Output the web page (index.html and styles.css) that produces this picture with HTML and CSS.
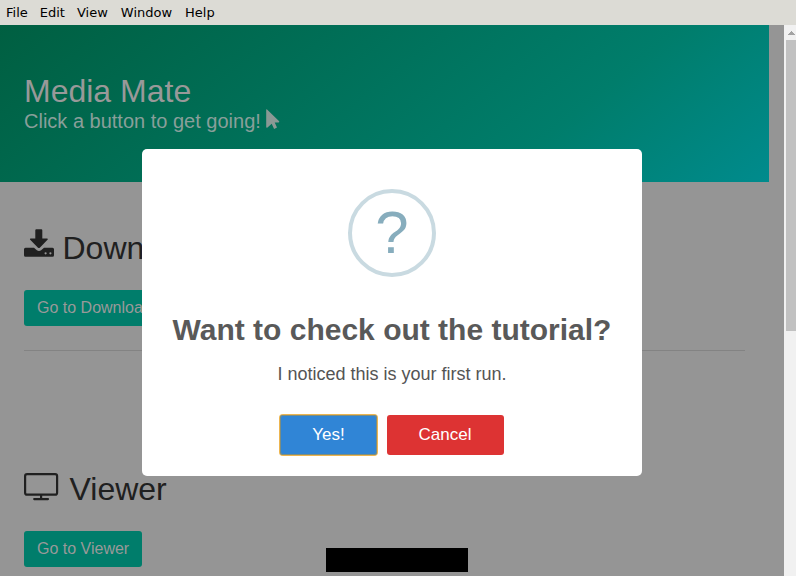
FILE: index.html
```html
<!DOCTYPE html>
<html lang="en">
<head>
<meta charset="utf-8">
<title>Media Mate</title>
<link rel="stylesheet" href="styles.css">
</head>
<body>
<nav class="menubar"><span>File</span><span>Edit</span><span>View</span><span class="spaced">Window</span><span class="spaced">Help</span></nav>
<div class="window">
  <main class="page">
    <header class="hero">
      <h1 class="hero-title">Media Mate</h1>
      <h2 class="hero-subtitle">Click a button to get going!<svg class="pointer" viewBox="0 0 14 20"><path d="M.8.2 13.2 12.3Q13.5 13.4 12.6 13.5H8.7L11 18.5 8.1 19.9 5.7 14.8 1.5 18.6Q.2 19.2.2 18V.8Q.2 0 .8.2Z"/></svg></h2>
    </header>
    <section class="section">
      <h2 class="title"><svg class="download-icon" viewBox="0 0 30 28"><path fill-rule="evenodd" d="M12.3.3h5Q18.3.3 18.3 1.3V9.6h4.8Q24.3 9.8 23.5 10.8L15.8 18.7Q14.9 19.5 14 18.7L6.2 10.8Q5.5 9.8 6.6 9.6h4.7V1.3Q11.3.3 12.3.3ZM1.5 18.7H10l2.9 2.5Q15 22.8 17.1 21.2L20 18.7h8.5Q30 18.7 30 20.2v6Q30 27.7 28.5 27.7h-27Q0 27.7 0 26.2v-6Q0 18.7 1.5 18.7ZM21.6 23.2a1.1 1.1 0 1 0 0 2.2 1.1 1.1 0 0 0 0-2.2Zm4.8 0a1.1 1.1 0 1 0 0 2.2 1.1 1.1 0 0 0 0-2.2Z"/></svg>Downloader</h2>
      <button class="button">Go to Downloader</button>
    </section>
    <hr class="divider">
    <section class="section viewer">
      <h2 class="title"><svg class="viewer-icon" viewBox="0 0 35 28"><rect x="1.1" y="1.1" width="32" height="20.6" rx="2"/><path d="M17.1 22v4M10.2 26.1h13.8" stroke-linecap="round"/></svg>Viewer</h2>
      <button class="button">Go to Viewer</button>
    </section>
  </main>
  <div class="scrollbar"><svg class="scroll-arrow" viewBox="0 0 7 4" shape-rendering="crispEdges"><path d="M3 0h1v1h1v1h1v1h1v1H0V3h1V2h1V1h1Z"/></svg><div class="thumb"></div></div>
</div>
<div class="notice"></div>
<div class="modal" role="dialog">
  <div class="question">?</div>
  <h2 class="modal-title">Want to check out the tutorial?</h2>
  <p class="modal-text">I noticed this is your first run.</p>
  <div class="actions"><button class="confirm">Yes!</button><button class="cancel">Cancel</button></div>
</div>
</body>
</html>
```
FILE: styles.css
```css
* { box-sizing: border-box; }
body {
  margin: 0;
  height: 576px;
  display: flex;
  flex-direction: column;
  overflow: hidden;
  position: relative;
  background: #959595;
  font-family: "Liberation Sans", Arial, sans-serif;
}
h1, h2, p { margin: 0; font-weight: 400; }
button { border: 0; font-family: inherit; }
.menubar {
  flex: none;
  height: 25px;
  padding-left: 6px;
  display: flex;
  gap: 12px;
  background: #dcdbd5;
  color: #000;
  font: 13px/25px "DejaVu Sans", sans-serif;
}
.spaced { margin-left: 1px; }
.window { flex: 1; min-height: 0; display: flex; }
.page { flex: 1; padding-right: 15px; }
.hero {
  height: 157px;
  padding: 48px 24px;
  background: linear-gradient(141deg, #005f41 0%, #007d6b 71%, #008b8d 100%);
}
.hero-title { color: #999; font-size: 32px; line-height: 36px; }
.hero-subtitle { display: flex; color: #899f9a; font-size: 20px; line-height: 25px; }
.pointer { width: 14px; height: 20px; margin-left: 5px; fill: #8a9995; }
.section { padding: 48px 24px 24px; }
.title {
  display: flex;
  height: 36px;
  margin-bottom: 24px;
  color: #202020;
  font-size: 32px;
  line-height: 36px;
}
.download-icon { width: 30px; height: 28px; margin: -1px 8.5px 0 0; fill: #202020; }
.viewer-icon { width: 35px; height: 28px; margin: 2px 10.5px 0 0; fill: none; stroke: #202020; stroke-width: 2.2; }
.button {
  display: block;
  height: 36px;
  padding: 0 13px;
  border-radius: 3px;
  background: #007d6b;
  color: #999;
  font-size: 16px;
  line-height: 36px;
}
.divider { height: 1px; margin: 0 24px; border: 0; background: #838383; }
.viewer { padding-top: 120px; }
.scrollbar { width: 12px; padding-left: 2px; background: #f1f1f1; }
.scroll-arrow { display: block; width: 7px; height: 4px; margin: 6px 0 5px 2px; fill: #a3a3a3; }
.thumb { height: 291px; background: #c1c1c1; }
.notice {
  position: absolute;
  left: 326px;
  top: 548px;
  width: 142px;
  height: 24px;
  background: #000;
}
.modal {
  position: absolute;
  left: 142px;
  top: 149px;
  width: 500px;
  height: 327px;
  padding-top: 40px;
  display: flex;
  flex-direction: column;
  align-items: center;
  border-radius: 5px;
  background: #fff;
  color: #545454;
}
.question {
  width: 88px;
  height: 88px;
  border: 4px solid #c9dae1;
  border-radius: 50%;
  color: #87adbd;
  font-size: 60px;
  line-height: 80px;
  text-align: center;
}
.modal-title { margin-top: 33px; color: #595959; font-size: 30px; line-height: 40px; font-weight: 700; white-space: nowrap; }
.modal-text { margin-top: 13px; font-size: 18px; line-height: 22px; }
.actions { display: flex; gap: 10px; margin-top: 30px; }
.confirm, .cancel {
  height: 40px;
  border-radius: 3px;
  color: #fff;
  font-size: 17px;
  line-height: 38px;
}
.confirm { width: 97px; background: #3085d6; box-shadow: inset 0 0 0 1px #7b8d80, 0 0 0 1px #edb54f; }
.cancel { width: 117px; padding: 0 6px 0 5px; background: #dd3333; }
```
